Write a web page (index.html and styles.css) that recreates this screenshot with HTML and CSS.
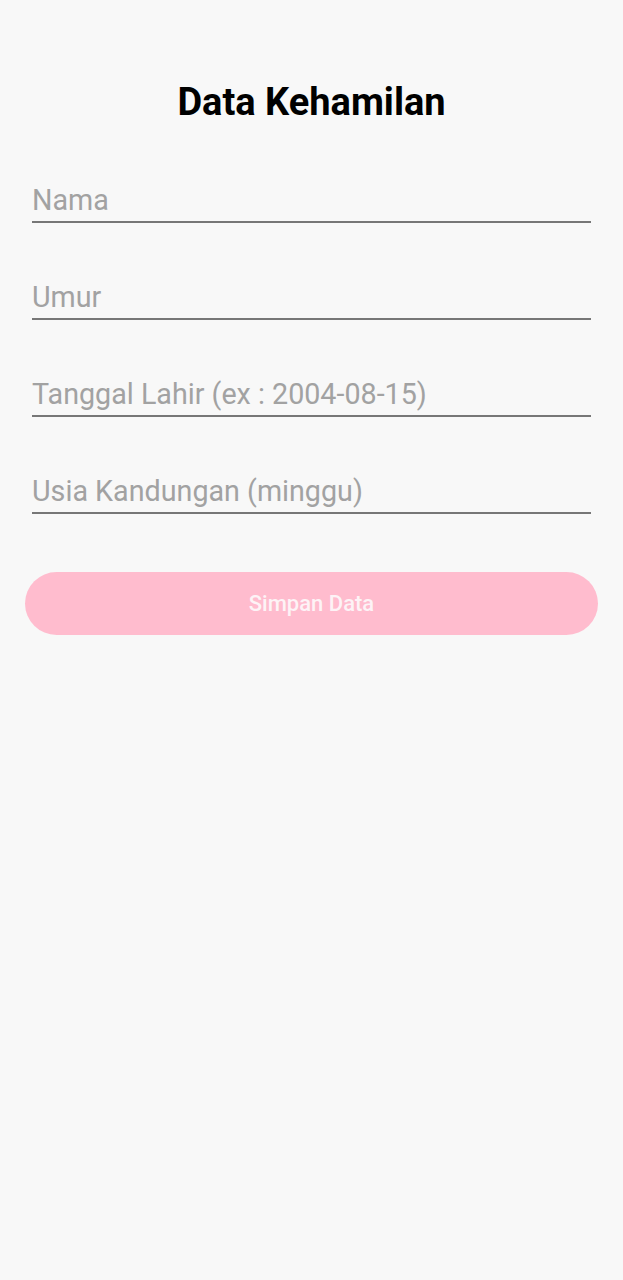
FILE: index.html
```html
<!DOCTYPE html>
<html>
<head>
<meta charset="utf-8">
<link rel="stylesheet" href="styles.css">
</head>
<body>
<main class="screen">
  <h1 class="title">Data Kehamilan</h1>
  <form class="form">
    <div class="field"><input class="input" type="text" placeholder="Nama"></div>
    <div class="field"><input class="input" type="text" placeholder="Umur"></div>
    <div class="field"><input class="input" type="text" placeholder="Tanggal Lahir (ex : 2004-08-15)"></div>
    <div class="field"><input class="input" type="text" placeholder="Usia Kandungan (minggu)"></div>
    <button class="btn" type="button">Simpan Data</button>
  </form>
</main>
</body>
</html>
```
FILE: styles.css
```css
html, body {
  margin: 0;
  padding: 0;
  background: #f8f8f8;
  font-family: Roboto, "Liberation Sans", sans-serif;
}
.screen {
  width: 623px;
  height: 1280px;
  box-sizing: border-box;
  padding: 78px 0 0;
}
.title {
  margin: 0;
  text-align: center;
  font-size: 38px;
  font-weight: 700;
  color: #000;
  line-height: 48px;
}
.form {
  display: flex;
  flex-direction: column;
  padding: 0 32px;
  margin-top: 55px;
}
.field {
  height: 97px;
  display: flex;
  align-items: flex-start;
}
.input {
  width: 100%;
  box-sizing: border-box;
  border: none;
  border-bottom: 2px solid #777;
  background: transparent;
  font-family: Roboto, "Liberation Sans", sans-serif;
  font-size: 28.7px;
  color: #333;
  padding: 0 0 2px;
  height: 42px;
  outline: none;
}
.input::placeholder { color: #a2a2a2; }
.btn {
  margin: 3px -7px 0;
  height: 63px;
  border: none;
  border-radius: 32px;
  background: #ffbcce;
  color: #fdf3f6;
  font-family: Roboto, "Liberation Sans", sans-serif;
  font-size: 22px;
  font-weight: 500;
}
```
